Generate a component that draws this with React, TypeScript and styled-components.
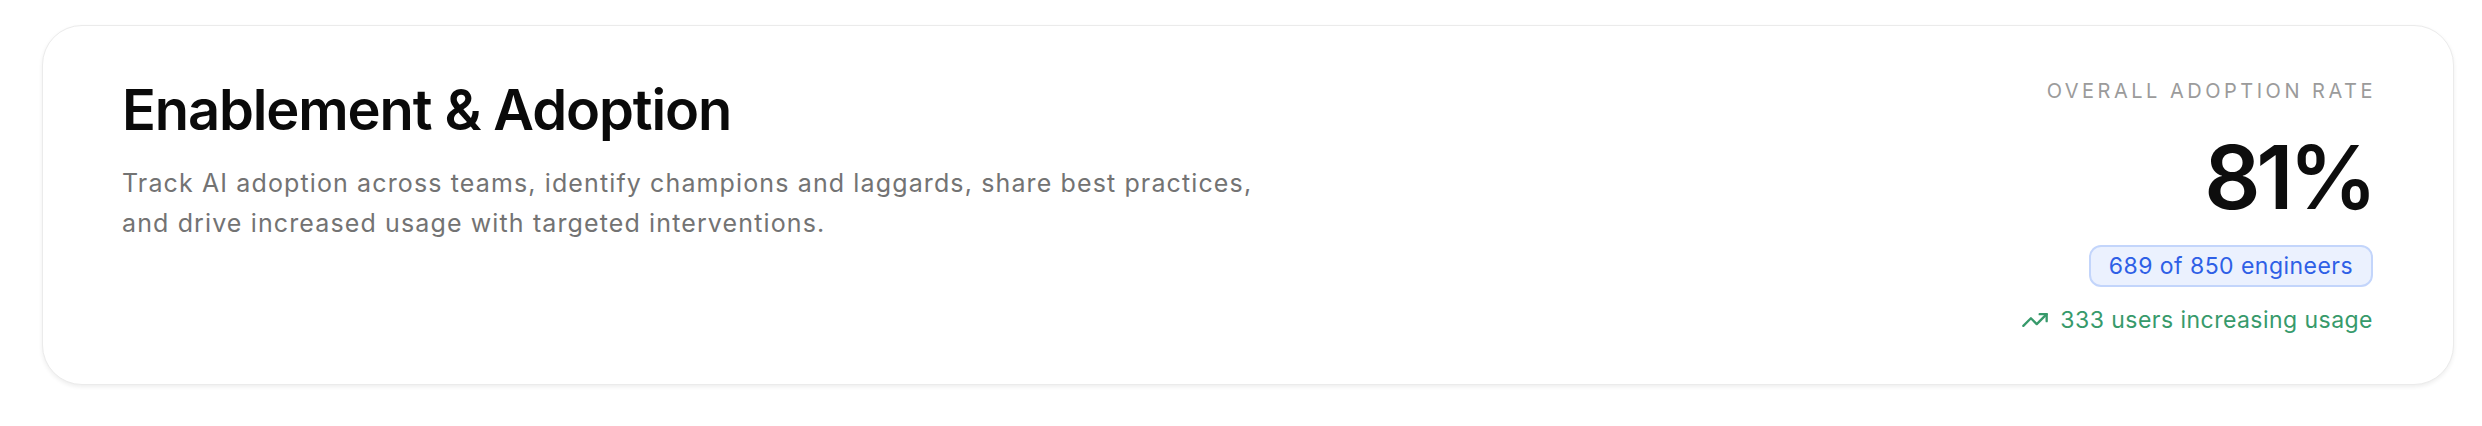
import React from "react";
import styled, { createGlobalStyle } from "styled-components";
import { TrendingUp } from "lucide-react";

const GlobalStyle = createGlobalStyle`
  * {
    box-sizing: border-box;
  }
  body {
    margin: 0;
    background: #ffffff;
    font-family: Inter, "Noto Sans", "Liberation Sans", sans-serif;
    -webkit-font-smoothing: antialiased;
  }
`;

const App: React.FunctionComponent = () => {
  return (
    <Page>
      <GlobalStyle />
      <Card>
        <Intro>
          <Title>Enablement &amp; Adoption</Title>
          <Description>
            Track AI adoption across teams, identify champions and laggards, share best practices,
            and drive increased usage with targeted interventions.
          </Description>
        </Intro>
        <Stats>
          <Label>Overall Adoption Rate</Label>
          <Rate>81%</Rate>
          <Badge>689 of 850 engineers</Badge>
          <Trend>
            <TrendingUp size={28} strokeWidth={2} />
            <span>333 users increasing usage</span>
          </Trend>
        </Stats>
      </Card>
    </Page>
  );
};

const Page = styled.div`
  padding: 25px 28px 40px 42px;
`;
const Card = styled.section`
  display: flex;
  justify-content: space-between;
  align-items: flex-start;
  padding: 51px 80px 49px 79px;
  background: #ffffff;
  border: 1px solid #ebebeb;
  border-radius: 40px;
  box-shadow: 0 2px 4px rgba(0, 0, 0, 0.07);
`;
const Intro = styled.div`
  display: flex;
  flex-direction: column;
  padding-top: 3px;
`;
const Title = styled.h1`
  margin: 0;
  font-size: 56px;
  line-height: 1.1;
  font-weight: 600;
  letter-spacing: -0.02em;
  color: #0a0a0a;
`;
const Description = styled.p`
  margin: 21px 0 0;
  max-width: 1160px;
  font-size: 25px;
  line-height: 40px;
  letter-spacing: 0.045em;
  color: #737373;
`;
const Stats = styled.div`
  display: flex;
  flex-direction: column;
  align-items: flex-end;
  text-align: right;
`;
const Label = styled.div`
  font-size: 20px;
  line-height: 28px;
  letter-spacing: 0.175em;
  text-transform: uppercase;
  color: #9b9b9b;
  margin-right: -3px;
`;
const Rate = styled.div`
  margin-top: 28px;
  font-size: 88px;
  line-height: 1;
  font-weight: 600;
  letter-spacing: -0.05em;
  color: #0d0d0d;
`;
const Badge = styled.div`
  margin-top: 24px;
  padding: 4px 18px;
  font-size: 23px;
  line-height: 30px;
  letter-spacing: 0.02em;
  color: #2e5fe6;
  background: #ebf1fe;
  border: 2px solid #c3d5fb;
  border-radius: 12px;
`;
const Trend = styled.div`
  display: flex;
  align-items: center;
  gap: 11px;
  margin-top: 18px;
  font-size: 23px;
  line-height: 30px;
  letter-spacing: 0.02em;
  color: #379a6b;
`;

export default App;
